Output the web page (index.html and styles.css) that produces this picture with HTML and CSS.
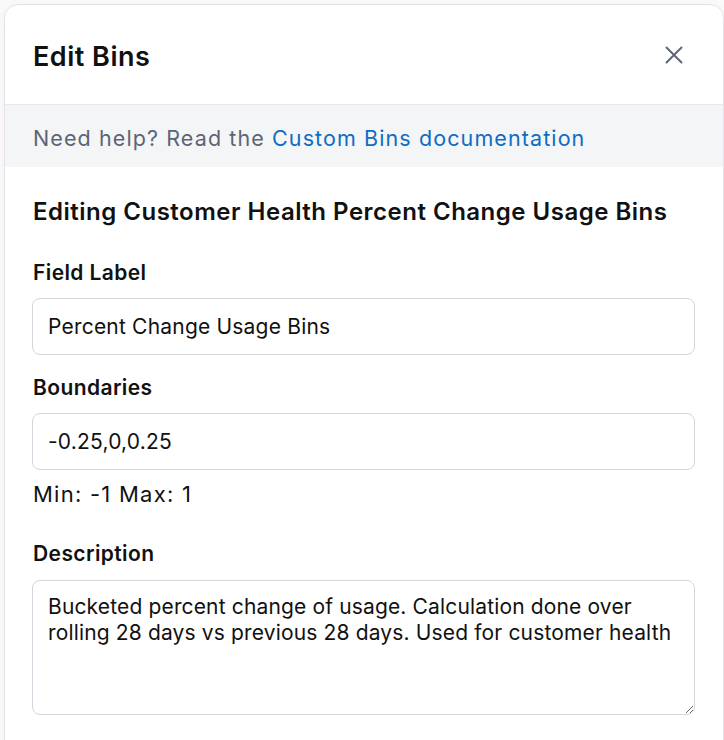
FILE: index.html
```html
<!DOCTYPE html>
<html lang="en">
<head>
<meta charset="utf-8">
<title>Edit Bins</title>
<link rel="stylesheet" href="styles.css">
</head>
<body>
  <div class="modal">
    <header class="modal-header">
      <h1 class="modal-title">Edit Bins</h1>
      <button class="close-btn" type="button" aria-label="Close">
        <svg width="18" height="18" viewBox="0 0 18 18" fill="none" stroke="currentColor" stroke-width="2" stroke-linecap="round">
          <path d="M1.5 1.5 L16.5 16.5 M16.5 1.5 L1.5 16.5"/>
        </svg>
      </button>
    </header>
    <div class="help-bar">Need help? Read the <a class="help-link" href="#">Custom Bins documentation</a></div>
    <div class="modal-body">
      <h2 class="section-title">Editing Customer Health Percent Change Usage Bins</h2>

      <label class="field-label" for="label">Field Label</label>
      <input class="text-input" id="label" type="text" value="Percent Change Usage Bins">

      <label class="field-label" for="bounds">Boundaries</label>
      <input class="text-input text-input-hinted" id="bounds" type="text" value="-0.25,0,0.25">
      <div class="range-hint">Min: -1 Max: 1</div>

      <label class="field-label field-label-spaced" for="desc">Description</label>
      <textarea class="text-area" id="desc">Bucketed percent change of usage. Calculation done over rolling 28 days vs previous 28 days. Used for customer health</textarea>
    </div>
  </div>
</body>
</html>
```

FILE: styles.css
```css
* {
  box-sizing: border-box;
}

html, body {
  margin: 0;
  height: 100%;
  overflow: hidden;
}

body {
  background: #fbfafb;
  font-family: Inter, "Noto Sans", "Liberation Sans", sans-serif;
  color: #111111;
}

.modal {
  margin: 4px 0 0 4px;
  width: 720px;
  height: 760px;
  background: #ffffff;
  border: 1px solid #e8dfe8;
  border-radius: 14px;
  overflow: hidden;
  box-shadow: 0 2px 12px rgba(0, 0, 0, 0.04);
}

.modal-header {
  height: 100px;
  display: flex;
  align-items: center;
  justify-content: space-between;
  padding: 0 40px 0 28px;
  border-bottom: 1px solid #e6e7ea;
}

.modal-title {
  margin: 4px 0 0;
  font-size: 27px;
  font-weight: 600;
  letter-spacing: 0.5px;
  color: #111111;
}

.close-btn {
  display: flex;
  padding: 0;
  border: 0;
  background: none;
  color: #5f6675;
}

.help-bar {
  height: 62px;
  padding: 5px 28px 0;
  line-height: 57px;
  background: #f4f5f7;
  font-size: 21.5px;
  letter-spacing: 1.1px;
  color: #5c6575;
  white-space: nowrap;
}

.help-link {
  color: #0f6cc4;
  text-decoration: none;
}

.modal-body {
  display: flex;
  flex-direction: column;
  padding: 32px 28px 0 27px;
}

.section-title {
  margin: 0 0 36px 1px;
  font-size: 24px;
  font-weight: 600;
  line-height: 26px;
  letter-spacing: 0.5px;
  color: #111111;
}

.field-label {
  margin: 0 0 13px 1px;
  font-size: 21px;
  font-weight: 600;
  line-height: 24px;
  letter-spacing: 0.4px;
  color: #111111;
}

.field-label-spaced {
  margin-top: 34px;
  margin-bottom: 14px;
}

.text-input,
.text-area {
  width: 663px;
  border: 1px solid #d3d6dd;
  border-radius: 8px;
  background: #ffffff;
  font-family: inherit;
  font-size: 21px;
  letter-spacing: 0.2px;
  color: #111111;
  padding: 0 15px;
  outline: none;
}

.text-input {
  height: 57px;
  margin-bottom: 21px;
}

.text-input-hinted {
  margin-bottom: 10px;
}

.range-hint {
  margin-left: 1px;
  font-size: 22px;
  line-height: 28px;
  letter-spacing: 1.25px;
  color: #111111;
}

.text-area {
  height: 135px;
  padding: 13px 12px 13px 15px;
  line-height: 26px;
  letter-spacing: 0.15px;
  resize: vertical;
}
```
